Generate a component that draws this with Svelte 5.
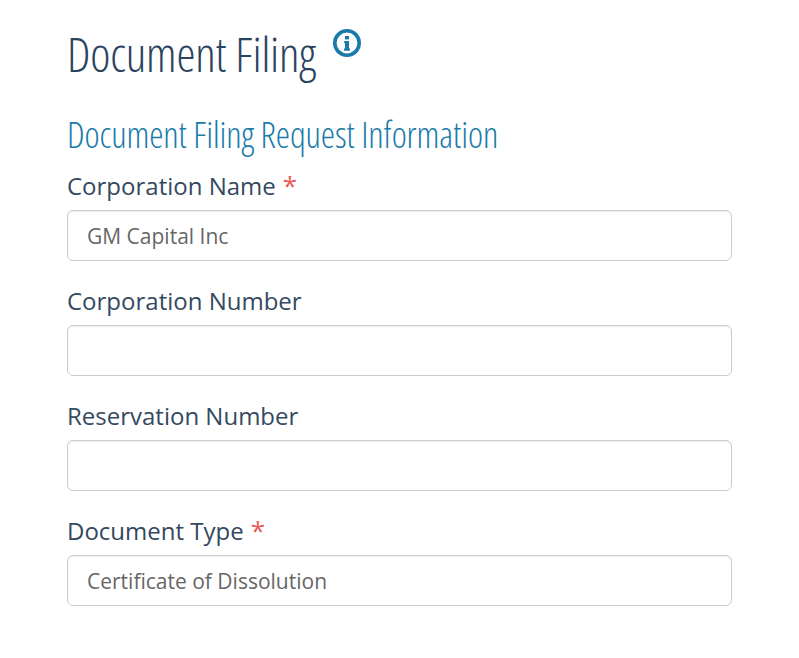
<script>
  const fields = [
    { label: "Corporation Name", value: "GM Capital Inc", required: true },
    { label: "Corporation Number", value: "" },
    { label: "Reservation Number", value: "" },
    { label: "Document Type", value: "Certificate of Dissolution", required: true },
  ];
</script>

<main class="page">
  <div class="title-row">
    <h1>Document Filing</h1>
    <svg class="info" width="30" height="30" viewBox="0 0 30 30" aria-hidden="true">
      <circle cx="15" cy="15" r="12.2" fill="none" stroke="#1a7bab" stroke-width="3.6" />
      <rect x="13" y="8" width="4" height="3.400" fill="#1a7bab" />
      <path d="M12.200 13h4.800v7.600h1v2.200h-6v-2.200h1v-5.400h-0.800z" fill="#1a7bab" />
    </svg>
  </div>
  <h2>Document Filing Request Information</h2>
  <form class="fields">
    {#each fields as f}
      <div class="field">
        <label for={f.label}>
          {f.label}{#if f.required}<span class="req">*</span>{/if}
        </label>
        <input id={f.label} type="text" value={f.value} />
      </div>
    {/each}
  </form>
</main>

<style>
  :global(body) {
    background: #fff;
    font-family: "Open Sans", sans-serif;
  }
  .page {
    padding: 0 67px;
  }
  .title-row {
    display: flex;
    align-items: flex-start;
    gap: 16px;
    padding-top: 24px;
  }
  h1 {
    margin: 0;
    font-family: "Open Sans", sans-serif;
    font-stretch: condensed;
    font-weight: 300;
    font-size: 48px;
    letter-spacing: -0.14px;
    line-height: 60px;
    color: #2c4360;
  }
  .info {
    margin-top: 4px;
  }
  h2 {
    margin: 29px 0 0;
    font-family: "Open Sans", sans-serif;
    font-stretch: condensed;
    font-weight: 300;
    font-size: 36px;
    letter-spacing: -0.09px;
    line-height: 44px;
    color: #1a7bab;
  }
  .fields {
    display: flex;
    flex-direction: column;
    gap: 25px;
    margin-top: 14px;
  }
  label {
    display: block;
    font-size: 24px;
    line-height: 30px;
    color: #34495f;
    margin-bottom: 9px;
  }
  .req {
    margin-left: 7px;
    font-size: 26px;
    line-height: 20px;
    color: #ea5a52;
  }
  input {
    display: block;
    box-sizing: border-box;
    width: 100%;
    height: 51px;
    padding: 0 19px;
    border: 1px solid #ccc;
    border-radius: 6px;
    background: #fff;
    box-shadow: inset 0 1px 1px rgba(0, 0, 0, 0.075);
    font-family: "Open Sans", sans-serif;
    font-size: 21px;
    color: #666;
  }
</style>
